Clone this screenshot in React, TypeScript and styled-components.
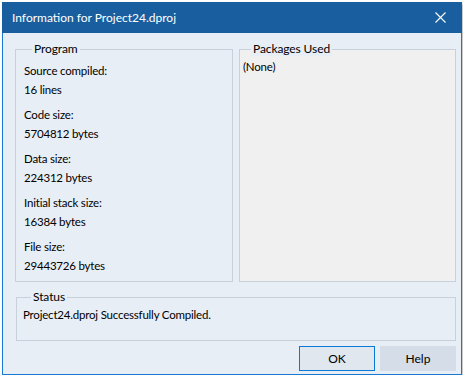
import styled, { createGlobalStyle } from "styled-components"

const GlobalStyle = createGlobalStyle`
    html, body {
        margin: 0;
        padding: 0;
        background: #ffffff;
    }
    body {
        font-family: Lato, "Liberation Sans", sans-serif;
        font-size: 11.5px;
        letter-spacing: -0.2px;
        color: #000000;
    }
`

const Window = styled.div`
    box-sizing: border-box;
    margin: 2px 0 0 2px;
    width: 460px;
    height: 373px;
    border: 1px solid #1a78d2;
    border-top: 0;
    background: #e8eef6;
    display: flex;
    flex-direction: column;
    box-shadow: 2px 2px 3px rgba(0, 0, 0, 0.25);
`

const TitleBar = styled.div`
    height: 31px;
    margin: 0 -1px;
    background: #195f9f;
    color: #ffffff;
    display: flex;
    align-items: center;
    justify-content: space-between;
    padding: 0 0 0 10px;
`

const Title = styled.span`
    font-size: 12px;
    letter-spacing: 0;
`

const CloseButton = styled.button`
    width: 44px;
    height: 31px;
    border: 0;
    background: transparent;
    color: #ffffff;
    display: flex;
    align-items: center;
    justify-content: center;
    padding: 0;
`

const Body = styled.div`
    flex: 1;
    display: flex;
    flex-direction: column;
    padding: 9px 5px 0 12px;
`

const TopRow = styled.div`
    display: grid;
    grid-template-columns: 218px 217px;
    column-gap: 6px;
    height: 240px;
`

const Group = styled.fieldset<{ fill?: string; pad: string }>`
    margin: 0;
    min-width: 0;
    border: 1px solid #c6d1dc;
    background: ${props => props.fill || "transparent"};
    padding: ${props => props.pad};
    legend {
        padding: 0 2px;
        margin-left: 8px;
        line-height: 14px;
        font-size: 12px;
        letter-spacing: -0.1px;
        background: #e8eef6;
    }
`

const Pair = styled.div`
    margin-bottom: 6px;
    line-height: 19px;
`

const Line = styled.div`
    line-height: 16px;
`

const StatusGroup = styled(Group)`
    margin: 8px 0 0 1px;
    height: 46px;
`

const Buttons = styled.div`
    display: flex;
    justify-content: flex-end;
    gap: 5px;
    margin-top: 5px;
`

const Button = styled.button<{ focused?: boolean }>`
    width: 76px;
    height: 25px;
    font-family: Lato, "Liberation Sans", sans-serif;
    font-size: 12px;
    color: #000000;
    background: ${props => props.focused ? "#e1e7ef" : "#d4dde8"};
    border: 1px solid ${props => props.focused ? "#0a78d7" : "#d4dde8"};
    padding: 0;
`

const program = [
    ["Source compiled:", "16 lines"],
    ["Code size:", "5704812 bytes"],
    ["Data size:", "224312 bytes"],
    ["Initial stack size:", "16384 bytes"],
    ["File size:", "29443726 bytes"],
]

const App = () => {
    return (
        <>
            <GlobalStyle />
            <Window>
                <TitleBar>
                    <Title>Information for Project24.dproj</Title>
                    <CloseButton>
                        <svg width="11" height="11" viewBox="0 0 11 11">
                            <path d="M0.5 0.5 L10.5 10.5 M10.5 0.5 L0.5 10.5" stroke="#ffffff" strokeWidth="1.1" />
                        </svg>
                    </CloseButton>
                </TitleBar>
                <Body>
                    <TopRow>
                        <Group pad="5px 8px 0 8px">
                            <legend>Program</legend>
                            {program.map(([label, value]) => (
                                <Pair key={label}>
                                    <div>{label}</div>
                                    <div>{value}</div>
                                </Pair>
                            ))}
                        </Group>
                        <Group fill="#f0f0f0" pad="3px 3px 0 3px">
                            <legend>Packages Used</legend>
                            <Line>(None)</Line>
                        </Group>
                    </TopRow>
                    <StatusGroup pad="3px 6px 0 6px">
                        <legend>Status</legend>
                        <Line>Project24.dproj Successfully Compiled.</Line>
                    </StatusGroup>
                    <Buttons>
                        <Button focused>OK</Button>
                        <Button>Help</Button>
                    </Buttons>
                </Body>
            </Window>
        </>
    )
}

export default App
